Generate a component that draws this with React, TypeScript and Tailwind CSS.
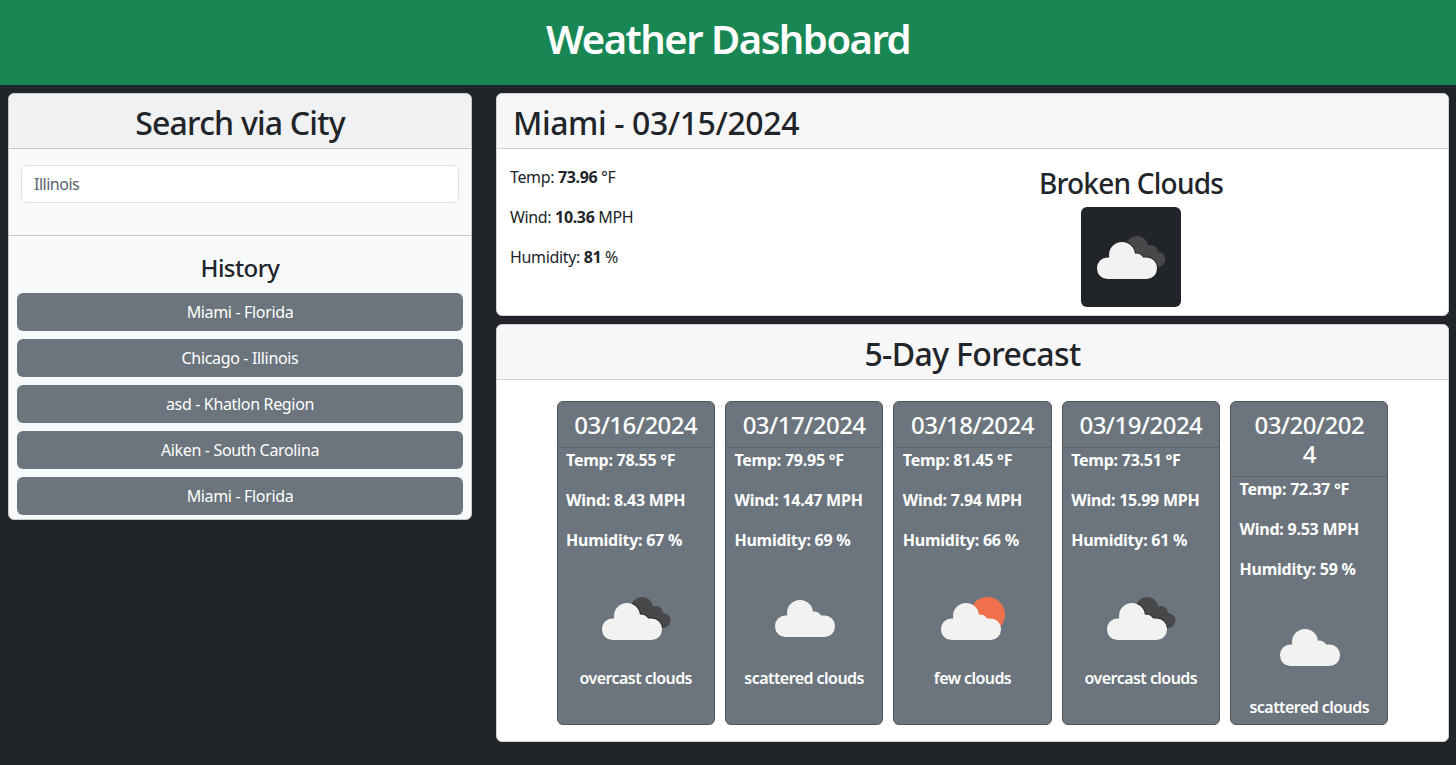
import React from 'react';

type IconKind = 'overcast' | 'scattered' | 'few';

const history = ['Miami - Florida', 'Chicago - Illinois', 'asd - Khatlon Region', 'Aiken - South Carolina', 'Miami - Florida'];

const forecast: { date: string[]; temp: string; wind: string; humidity: string; icon: IconKind; desc: string }[] = [
  { date: ['03/16/2024'], temp: '78.55', wind: '8.43', humidity: '67', icon: 'overcast', desc: 'overcast clouds' },
  { date: ['03/17/2024'], temp: '79.95', wind: '14.47', humidity: '69', icon: 'scattered', desc: 'scattered clouds' },
  { date: ['03/18/2024'], temp: '81.45', wind: '7.94', humidity: '66', icon: 'few', desc: 'few clouds' },
  { date: ['03/19/2024'], temp: '73.51', wind: '15.99', humidity: '61', icon: 'overcast', desc: 'overcast clouds' },
  { date: ['03/20/202', '4'], temp: '72.37', wind: '9.53', humidity: '59', icon: 'scattered', desc: 'scattered clouds' },
];

// Light cloud shared by all the weather icons
const Cloud = () => (
  <g fill="#f2f2f0">
    <circle cx="41" cy="48" r="13" />
    <circle cx="55" cy="55" r="8.5" />
    <rect x="16" y="50.5" width="60" height="21.5" rx="10.5" />
  </g>
);

const DarkCloud = () => (
  <>
    <circle cx="56" cy="40" r="11" />
    <circle cx="70" cy="45" r="7" />
    <circle cx="77" cy="52.5" r="7.5" />
    <rect x="52" y="42" width="24" height="18" />
  </>
);

const WeatherIcon = ({ kind, className }: { kind: IconKind; className: string }) => (
  <svg viewBox="0 0 100 100" className={className}>
    {kind === 'overcast' && (
      <>
        <clipPath id="dark-cloud">
          <DarkCloud />
        </clipPath>
        <g fill="#48484a">
          <DarkCloud />
        </g>
        {/* thin seam only where the two clouds touch */}
        <g clipPath="url(#dark-cloud)" fill="none" stroke="#26282b" strokeWidth="2">
          <circle cx="41" cy="48" r="13" />
          <circle cx="55" cy="55" r="8.5" />
          <rect x="16" y="50.5" width="60" height="21.5" rx="10.5" />
        </g>
      </>
    )}
    {kind === 'few' && <circle cx="65.5" cy="46.5" r="17.5" fill="#f0704c" />}
    {kind === 'overcast' && <Cloud />}
    {kind === 'few' && (
      <g transform="translate(3 0)">
        <Cloud />
      </g>
    )}
    {kind === 'scattered' && (
      <g transform="translate(5 -3)">
        <Cloud />
      </g>
    )}
  </svg>
);

export default function App() {
  return (
    <div className="min-h-screen bg-[#212529] text-[#212529] text-base font-['Noto_Sans','Open_Sans',sans-serif]">
      <header className="h-[85px] pb-2 bg-[#198754] flex items-center justify-center">
        <h1 className="text-[40px] leading-[48px] font-semibold tracking-[-1.5px] text-white">Weather Dashboard</h1>
      </header>

      <main className="flex items-start gap-6 px-2 pt-2">
        {/* Search column */}
        <section className="w-[464px] shrink-0 bg-[#f8f9fa] border border-[#c6c7c8] rounded-md overflow-hidden">
          <div className="h-[55px] pt-1 bg-[#f0f1f2] border-b border-[#c6c7c8] flex items-center justify-center">
            <h2 className="text-[32px] leading-[38px] font-medium tracking-[-0.8px]">Search via City</h2>
          </div>
          <div className="h-[87px] border-b border-[#c6c7c8] px-3 pt-4">
            <input
              readOnly
              value="Illinois"
              className="block w-full h-[38px] px-3 bg-white border border-[#dee2e6] rounded-md text-[#59616f] tracking-[-0.5px] outline-none"
            />
          </div>
          <h3 className="text-2xl leading-[29px] font-medium tracking-[-0.55px] text-center mt-[17px] mb-[11px]">History</h3>
          <div className="flex flex-col gap-2 px-2 pb-1">
            {history.map((item, i) => (
              <button key={i} className="h-[38px] bg-[#6c757d] text-white rounded-md text-center tracking-[-0.34px]">
                {item}
              </button>
            ))}
          </div>
        </section>

        {/* Weather column */}
        <div className="w-[953px] shrink-0 flex flex-col gap-2">
          <section className="bg-white border border-[#d0d1d2] rounded-md overflow-hidden">
            <div className="h-[55px] pt-1 bg-[#f7f7f7] border-b border-[#d0d1d2] flex items-center px-4">
              <h2 className="text-[32px] leading-[38px] font-medium tracking-[-0.4px]">Miami - 03/15/2024</h2>
            </div>
            <div className="grid grid-cols-[317px_1fr] h-[166px] pt-4">
              <div className="pl-[13px] flex flex-col gap-4 tracking-[-0.35px]">
                <p className="leading-6">Temp: <b>73.96</b> °F</p>
                <p className="leading-6">Wind: <b>10.36</b> MPH</p>
                <p className="leading-6">Humidity: <b>81</b> %</p>
              </div>
              <div className="flex flex-col items-center">
                <h3 className="text-[28px] leading-[34px] pt-px mb-[7px] font-medium tracking-[-0.77px]">Broken Clouds</h3>
                <div className="w-[100px] h-[100px] bg-[#212529] rounded-md">
                  <WeatherIcon kind="overcast" className="w-[100px] h-[100px]" />
                </div>
              </div>
            </div>
          </section>

          <section className="bg-white border border-[#d0d1d2] rounded-md overflow-hidden">
            <div className="h-[55px] pt-1 bg-[#f7f7f7] border-b border-[#d0d1d2] flex items-center justify-center">
              <h2 className="text-[32px] leading-[38px] font-medium tracking-[-0.64px]">5-Day Forecast</h2>
            </div>
            <div className="flex justify-center gap-[10px] pt-[21px] pb-4">
              {forecast.map(day => (
                <article key={day.date.join('')} className="w-[158.4px] bg-[#6c757d] border border-[#50565c] rounded-md text-white overflow-hidden">
                  <div className="py-2 px-2 border-b border-[#5c636a] text-center text-2xl leading-[29px] font-medium tracking-[-0.55px]">
                    {day.date.map(line => (
                      <div key={line}>{line}</div>
                    ))}
                  </div>
                  <div className="pl-[8.5px] pr-2 font-bold tracking-[-0.25px]">
                    <p className="leading-6 mb-4">Temp: {day.temp} °F</p>
                    <p className="leading-6 mb-4">Wind: {day.wind} MPH</p>
                    <p className="leading-6 mb-4">Humidity: {day.humidity} %</p>
                  </div>
                  <div className="h-[98px] flex justify-center">
                    <WeatherIcon kind={day.icon} className="w-[100px] h-[100px] shrink-0" />
                  </div>
                  <p className="leading-6 text-center font-semibold tracking-[-0.55px] pb-[5px]">{day.desc}</p>
                </article>
              ))}
            </div>
          </section>
        </div>
      </main>
    </div>
  );
}
